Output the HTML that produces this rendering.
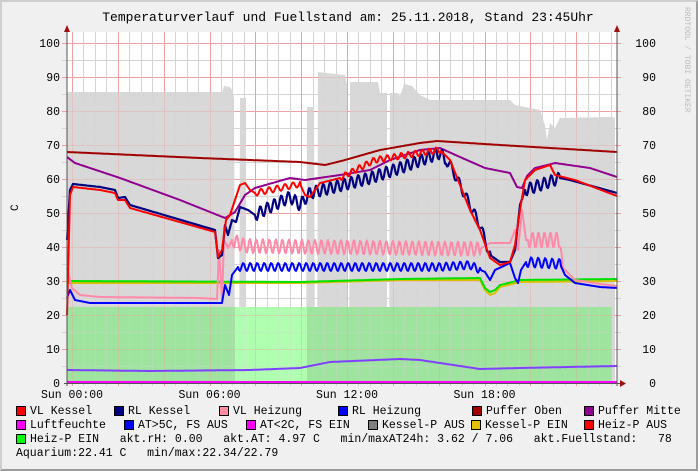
<!DOCTYPE html>
<html><head><meta charset="utf-8"><style>
body{margin:0;background:#f0f0f0;}
#w{position:relative;width:698px;height:471px;background:#f0f0f0;box-sizing:border-box;border-top:2px solid #cfcfcf;border-left:2px solid #cfcfcf;border-right:2px solid #9c9c9c;border-bottom:2px solid #9c9c9c;overflow:hidden;font-family:"Liberation Mono","DejaVu Sans Mono",monospace;color:#000;}
.t{position:absolute;white-space:pre;font-size:11.5px;line-height:12px;}
.sq{position:absolute;width:8px;height:8px;border:1px solid #000;}
svg{position:absolute;left:-2px;top:-2px;}
</style></head><body><div id="w">
<svg width="698" height="471" viewBox="0 0 698 471">
<rect x="67" y="32" width="550" height="351" fill="#fff"/>
<g id="grid"></g>
<polygon fill="#d8d8d8" points="67,383 67,92 222,92 224,86 230,87 232,90 234,98 235,383 239,383 240,98 246,98 246,383 306,383 307,107 314,107 315,383 317,383 318,72 345,75 347,85 348,383 349,383 350,82 378,82 380,93 387,93 387,383 389,383 390,93 398,93 400,96 404,84 412,86 420,95 430,100 510,100 515,105 540,110 545,125 547,140 550,123 555,128 560,118 612,117 615,118 615,383"/>
<rect x="67" y="307" width="545" height="76" fill="#b0ffb0"/>
<rect x="67" y="307" width="168" height="76" fill="#9ee49e"/>
<rect x="307" y="307" width="305" height="76" fill="#9ee49e"/>
<g id="grid2"></g>
<g id="lines" fill="none" stroke-width="2" stroke-linejoin="round"></g>
<line x1="67" y1="30" x2="67" y2="386" stroke="#555" stroke-width="1"/>
<line x1="617" y1="30" x2="617" y2="386" stroke="#555" stroke-width="1"/>
<line x1="64" y1="383.5" x2="622" y2="383.5" stroke="#555" stroke-width="1"/>
<polygon points="64,32 70,32 67,25" fill="#a01010"/>
<polygon points="614,32 620,32 617,25" fill="#a01010"/>
<polygon points="620,380 620,387 626,383.5" fill="#a01010"/>
<text x="348" y="21" text-anchor="middle" font-family="Liberation Mono,monospace" font-size="13">Temperaturverlauf und Fuellstand am: 25.11.2018, Stand 23:45Uhr</text>
<text transform="translate(685,7) rotate(90)" font-family="Liberation Mono,monospace" font-size="8" fill="#bdbdbd">RRDTOOL / TOBI OETIKER</text>
<text transform="translate(18,211) rotate(-90)" font-family="Liberation Mono,monospace" font-size="11">C</text>
<g id="lab" font-family="Liberation Mono,monospace" font-size="11.5"></g>
</svg>
<div class="sq" style="left:14px;top:404px;background:#f00"></div><div class="t" style="left:28px;top:404px">VL Kessel</div>
<div class="sq" style="left:112px;top:404px;background:#000080"></div><div class="t" style="left:126px;top:404px">RL Kessel</div>
<div class="sq" style="left:217px;top:404px;background:#ff8c9c"></div><div class="t" style="left:231px;top:404px">VL Heizung</div>
<div class="sq" style="left:336px;top:404px;background:#00f"></div><div class="t" style="left:350px;top:404px">RL Heizung</div>
<div class="sq" style="left:470px;top:404px;background:#a00000"></div><div class="t" style="left:484px;top:404px">Puffer Oben</div>
<div class="sq" style="left:582px;top:404px;background:#900090"></div><div class="t" style="left:596px;top:404px">Puffer Mitte</div>
<div class="sq" style="left:14px;top:418px;background:#f0f"></div><div class="t" style="left:28px;top:418px">Luftfeuchte</div>
<div class="sq" style="left:122px;top:418px;background:#00f"></div><div class="t" style="left:136px;top:418px">AT&gt;5C, FS AUS</div>
<div class="sq" style="left:244px;top:418px;background:#f0f"></div><div class="t" style="left:258px;top:418px">AT&lt;2C, FS EIN</div>
<div class="sq" style="left:366px;top:418px;background:#808080"></div><div class="t" style="left:380px;top:418px">Kessel-P AUS</div>
<div class="sq" style="left:469px;top:418px;background:#e0c000"></div><div class="t" style="left:483px;top:418px">Kessel-P EIN</div>
<div class="sq" style="left:582px;top:418px;background:#f00"></div><div class="t" style="left:596px;top:418px">Heiz-P AUS</div>
<div class="sq" style="left:14px;top:432px;background:#0f0"></div><div class="t" style="left:28px;top:432px">Heiz-P EIN   akt.rH: 0.00   akt.AT: 4.97 C   min/maxAT24h: 3.62 / 7.06   akt.Fuellstand:   78</div>
<div class="t" style="left:14px;top:446px">Aquarium:22.41 C   min/max:22.34/22.79</div>
</div>
<script>
var NS="http://www.w3.org/2000/svg";
function el(p,n,a,txt){var e=document.createElementNS(NS,n);for(var k in a)e.setAttribute(k,a[k]);if(txt)e.textContent=txt;p.appendChild(e);return e;}
var g=document.getElementById("grid"),g2=document.getElementById("grid2"),lab=document.getElementById("lab");
function Y(v){return 383-3.4*v;}
// grid
[g,g2].forEach(function(G,i){var op=i?0.35:1;
for(var v=5;v<=100;v+=5){var y=Y(v)+0.5;el(G,"line",{x1:62,x2:621,y1:y,y2:y,stroke:v%10?"#d4d4d4":"#f0a0a0","stroke-width":1,opacity:op});}
for(var k=-0;k<=48;k++){var x=Math.round(72+k*550/48)+0.5;if(x>617)break;el(G,"line",{x1:x,x2:x,y1:32,y2:386,stroke:k%4?"#d4d4d4":"#f0a0a0","stroke-width":1,opacity:op});}
});
for(var v=0;v<=100;v+=10){el(lab,"text",{x:60,y:Y(v)+4,"text-anchor":"end"},""+v);el(lab,"text",{x:656,y:Y(v)+4,"text-anchor":"end"},""+v);}
["Sun 00:00","Sun 06:00","Sun 12:00","Sun 18:00"].forEach(function(s,i){el(lab,"text",{x:72+i*137.5,y:398,"text-anchor":"middle"},s);});
var L=document.getElementById("lines");
function ser(kp,wob,col,w){var pts=[];
 for(var i=0;i<kp.length-2;i+=2){var x0=kp[i],y0=kp[i+1],x1=kp[i+2],y1=kp[i+3];
  if(x1==x0){pts.push([x0,y0]);continue;}
  for(var x=x0;x<x1;x+=1){var y=y0+(y1-y0)*(x-x0)/(x1-x0);pts.push([x,y]);}}
 pts.push([kp[kp.length-2],kp[kp.length-1]]);
 var s=pts.map(function(p){var y=p[1];(wob||[]).forEach(function(w){if(p[0]>=w[0]&&p[0]<=w[1])y+=w[2]*Math.sin(2*Math.PI*(p[0]-w[0])/w[3]);});return p[0]+","+y.toFixed(1);}).join(" ");
 el(L,"polyline",{points:s,stroke:col,"stroke-width":w||2});}
// AT (bottom)
ser([67,370,150,371,250,370,300,368,330,362,400,359,420,360,480,369,520,368,617,366],[],"#8040ff",2);
el(L,"line",{x1:67,x2:617,y1:382,y2:382,stroke:"#f0f","stroke-width":2});
// Kessel-P EIN yellow, Heiz-P green
ser([67,283,300,283,400,280,480,280,485,290,490,295,495,293,500,287,520,282,617,281],[],"#d8c000",2);
ser([67,281,300,282,400,279,480,278,485,288,490,292,495,290,500,285,520,280,617,279],[],"#00e000",2);
// Puffer Oben
ser([67,152,200,158,300,162,325,165,345,160,380,150,420,143,437,141,500,145,617,152],[],"#a00000",2);
// VL Heizung
ser([67,268,72,288,80,295,100,297,200,298,217,299,219,250,222,300,224,240,228,248,232,240,245,246,480,249,490,243,510,243,515,230,518,250,522,210,526,240,560,240,563,268,575,280,600,284,617,286],[[232,480,7,6.5],[528,560,8,6]],"#ff8aa8",2);
// RL Heizung
ser([67,298,70,290,75,300,90,303,215,303,222,303,225,285,229,295,232,275,238,267,440,267,470,265,485,272,490,280,495,270,510,263,515,278,518,283,521,270,526,262,560,264,565,275,575,283,600,287,617,288],[[238,480,4,7],[526,560,5,7]],"#0000ff",2);
// Puffer Mitte
ser([67,157,75,163,120,178,180,200,225,218,235,212,245,195,255,188,290,178,305,180,340,175,370,170,390,160,420,150,440,148,460,157,485,168,510,173,517,187,522,188,527,176,535,168,555,163,590,168,617,177],[],"#900090",2);
// RL Kessel
ser([67,240,70,190,73,184,100,187,115,190,118,198,125,197,130,205,215,230,218,258,222,255,225,225,228,235,232,220,236,222,240,207,248,210,255,215,270,207,290,197,300,205,310,193,330,188,370,178,400,168,440,153,450,165,460,185,470,205,480,225,490,255,500,262,510,262,515,250,520,205,525,190,540,185,560,178,570,180,617,193],[[255,445,6,7],[445,490,5,8],[525,560,6,7]],"#000080",2.2);
// VL Kessel
ser([67,315,70,195,73,187,100,190,115,193,118,200,125,200,130,208,215,232,218,257,222,250,226,220,230,215,235,200,240,185,245,183,250,190,255,193,300,184,305,195,310,197,320,183,340,178,375,160,420,153,440,150,450,160,460,185,470,210,480,230,490,258,500,265,510,262,515,245,520,210,525,180,535,170,550,165,555,175,575,180,617,196],[[255,300,3,8],[340,440,3,7]],"#ff0000",2);
</script>
</body></html>
